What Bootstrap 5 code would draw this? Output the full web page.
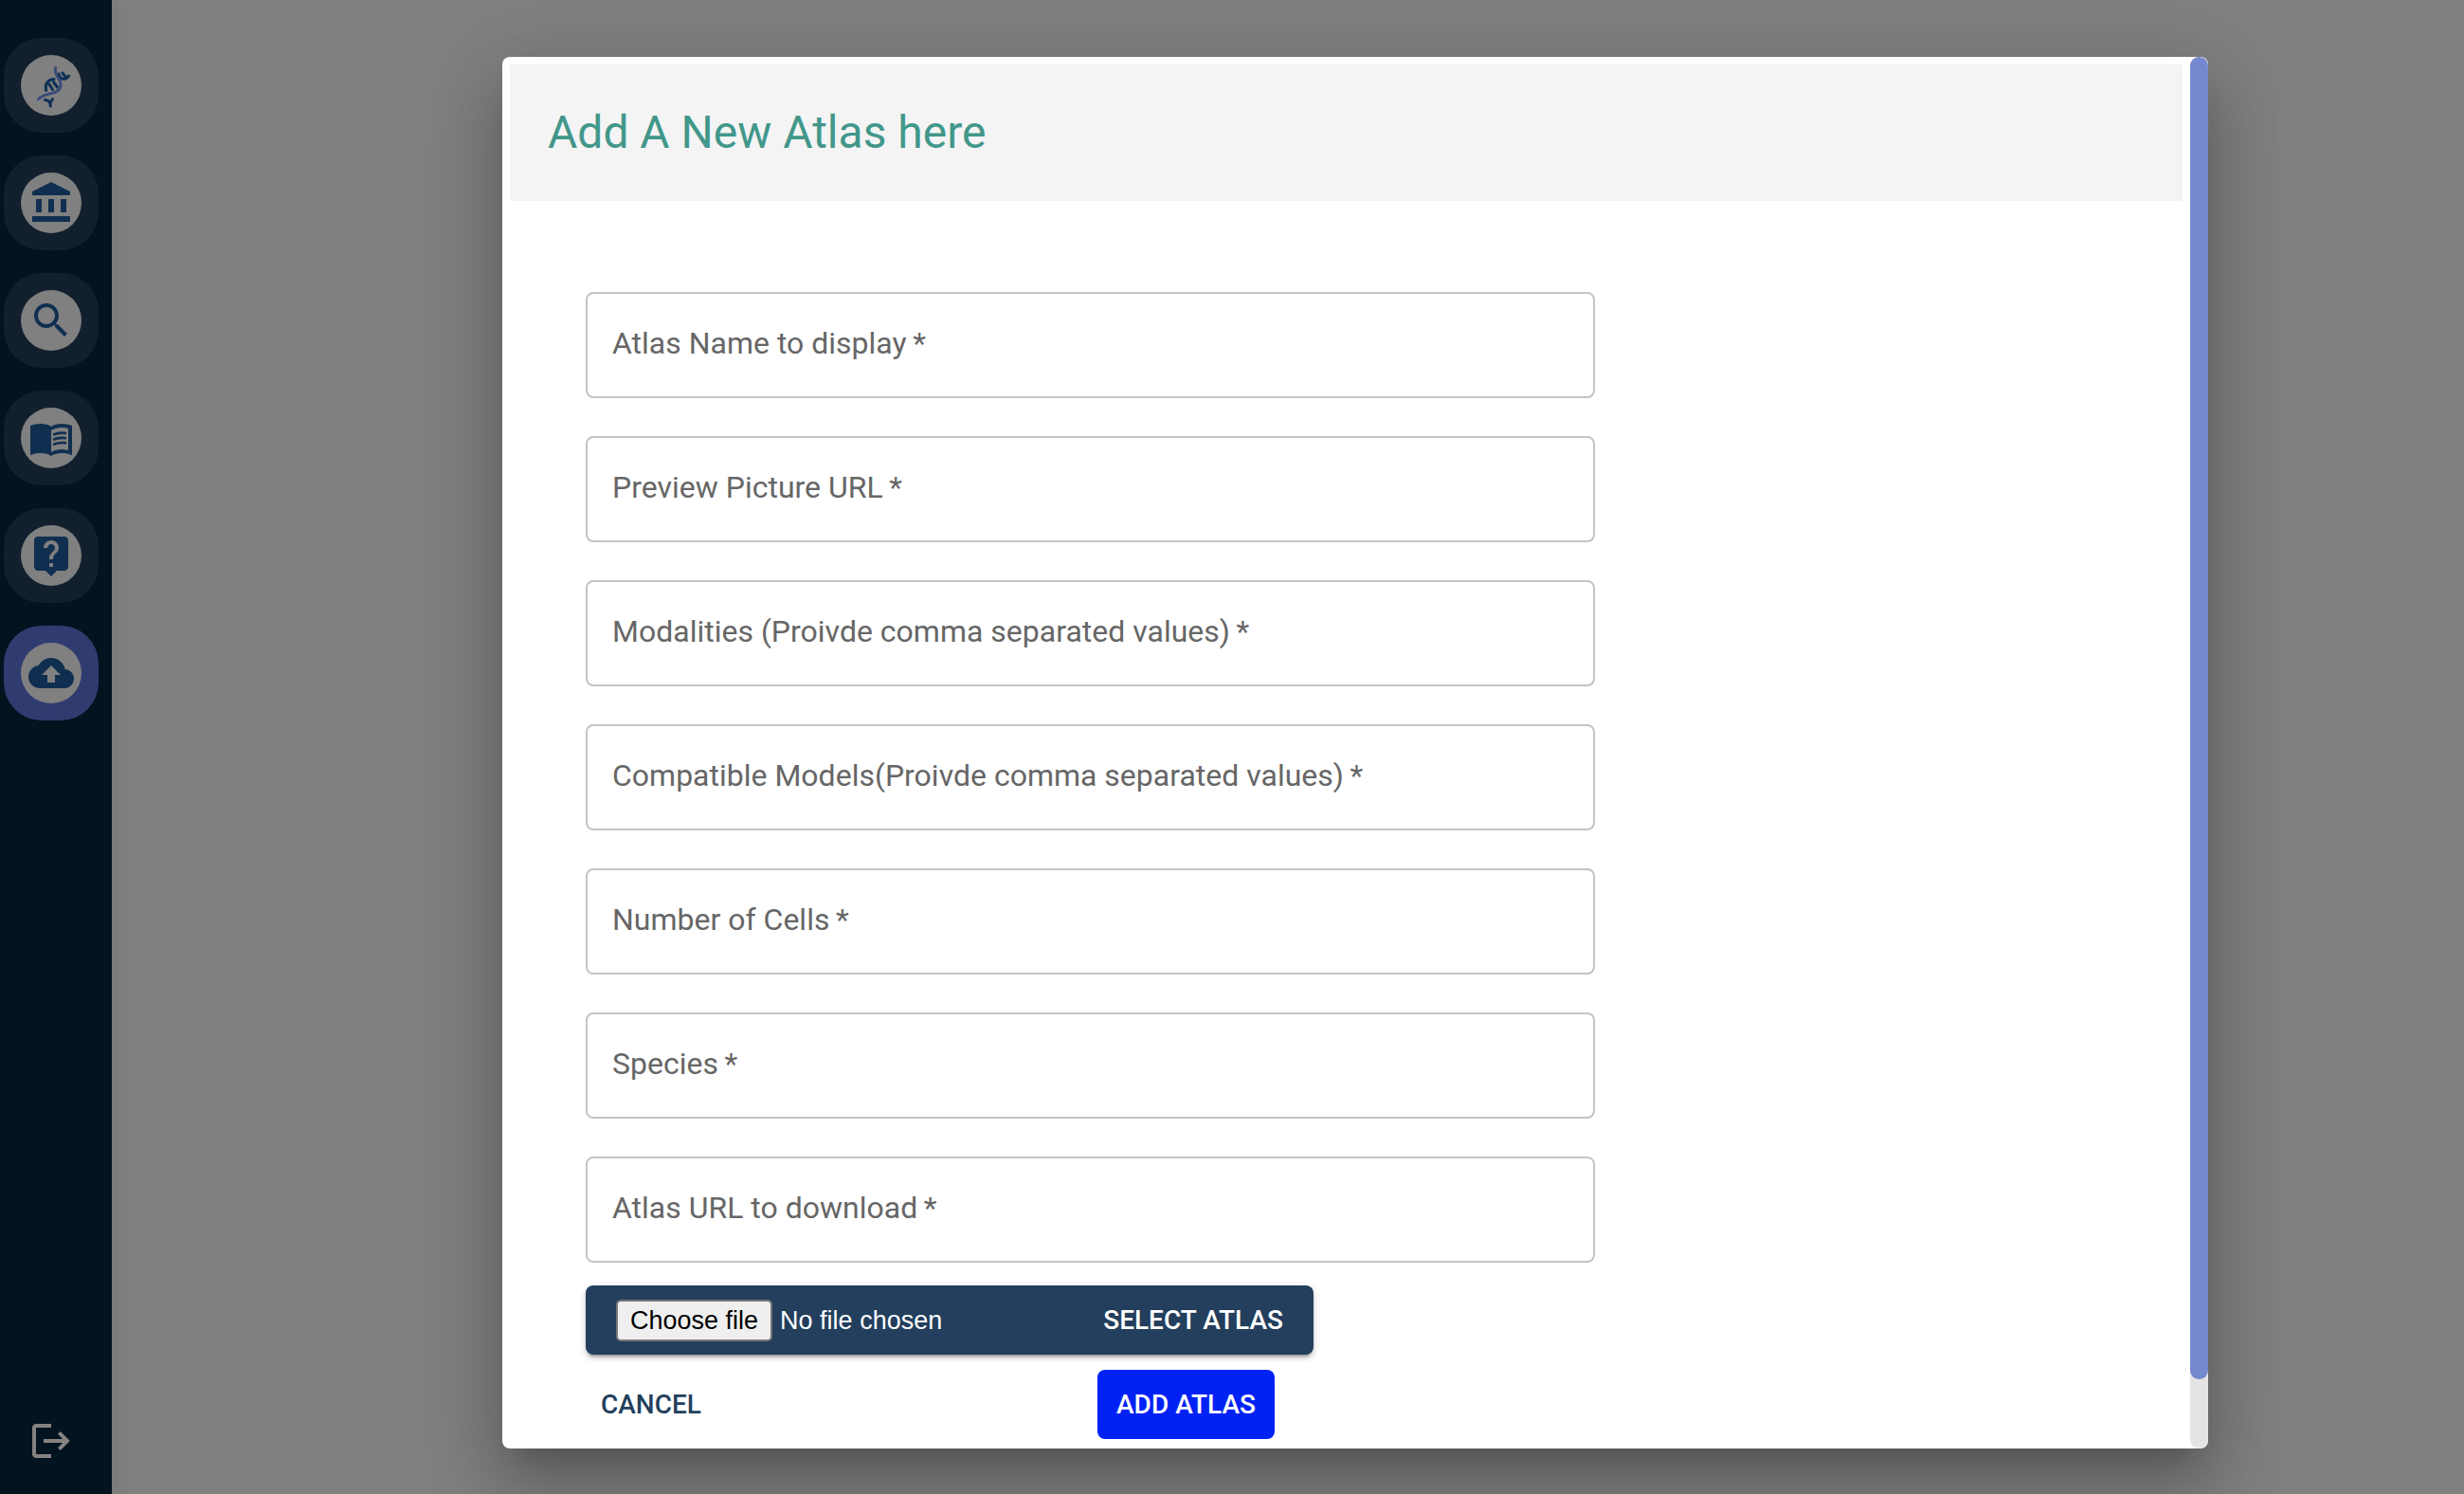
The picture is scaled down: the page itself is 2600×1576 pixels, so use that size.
<!DOCTYPE html>
<html lang="en">
<head>
<meta charset="utf-8">
<meta name="viewport" content="width=device-width, initial-scale=1">
<title>Add A New Atlas</title>
<link rel="stylesheet" href="https://cdn.jsdelivr.net/npm/bootstrap@5.3.0/dist/css/bootstrap.min.css">
<style>
  body { background: #808080; font-family: Roboto, sans-serif; font-size: 32px; }
  .side-rail { width: 118px; background: #041320; padding: 40px 14px 32px 4px; box-shadow: 0 4px 20px rgba(0,0,0,.12); }
  .rail-list { gap: 24px; }
  .rail-tile { width: 100px; height: 100px; border-radius: 40px; background: #12202e; }
  .rail-tile.is-current { background: #303c70; }
  .rail-disc { width: 64px; height: 64px; background: #808080; color: #102f50; }
  .rail-disc svg, .rail-exit svg { width: 48px; height: 48px; fill: currentColor; }
  .rail-exit { color: #868282; margin-left: 24px; }
  .stage { padding: 60px 270px 48px 412px; }
  .dialog-panel { border-radius: 8px; box-shadow: 0 22px 30px -14px rgba(0,0,0,.2), 0 48px 76px 6px rgba(0,0,0,.14), 0 18px 92px 16px rgba(0,0,0,.12); }
  .dialog-main { padding: 8px 8px 10px; }
  .dialog-head { background: #f4f4f4; height: 144px; padding: 0 40px; }
  .dialog-head h1 { font-size: 48px; line-height: 56px; color: #41978a; font-weight: 400; }
  .atlas-form { padding: 96px 80px 0; }
  .field-stack { max-width: 1065px; gap: 40px; }
  .field-stack .form-control { height: 112px; min-height: 112px; border: 2px solid #c4c4c4; border-radius: 8px; padding: 28px; font-size: 32px; }
  .field-stack .form-floating > label { font-size: 32px; line-height: 48px; padding: 30px 28px; color: #666; border: 0; }
  .file-bar { width: 768px; max-width: 100%; height: 73px; margin-top: 24px; padding: 0 32px; border-radius: 8px; background: #233f5d; color: #fff; cursor: pointer;
    box-shadow: 0 6px 2px -4px rgba(0,0,0,.2), 0 4px 4px rgba(0,0,0,.14), 0 2px 10px rgba(0,0,0,.12); }
  .file-pick { font-family: "Liberation Sans", Arial, sans-serif; font-size: 27px; line-height: 32px; gap: 8px; }
  .file-pick b { font-weight: 400; color: #000; background: #efefef; border: 2px solid #767676; border-radius: 5px; padding: 4px 13px; }
  .caps-text { font-size: 28px; font-weight: 500; line-height: 49px; }
  .action-row { margin-top: 16px; width: 727px; max-width: 100%; }
  .action-row .btn { height: 73px; padding: 0 16px; border: 0; border-radius: 8px; }
  .btn-cancel { color: #233f5d; }
  .btn-add, .btn-add:hover { min-width: 187px; background: #0022f5; color: #fff; }
  .scroll-track { width: 19px; border-radius: 10px; background: #e4e4e4; }
  .scroll-thumb { height: 95%; border-radius: 10px; background: #7488cf; }
</style>
</head>
<body>
<div class="d-flex min-vh-100">
  <nav class="side-rail d-flex flex-column justify-content-between flex-shrink-0" aria-label="Main">
    <div class="rail-list d-flex flex-column">
      <a href="#" class="rail-tile d-flex align-items-center justify-content-center" aria-label="Home"><span class="rail-disc rounded-circle d-flex align-items-center justify-content-center">
        <svg viewBox="0 0 48 48"><g fill="none" stroke-linecap="round" stroke-width="3"><path stroke="#0f3055" d="M18.700 29.500c-1.700-6 1.300-11.500 8.300-12M22 23l3.500 5.500M26.500 20.500l4 5.500M32 12c.5 4 3 5.500 5.500 5.300 2.200-.2 4-1.500 5-3.300M36 11l3 4M17.500 39.500c3.500 0 6 2.500 5.800 6.500M25.500 38.500l-2 3"/><path stroke="#384a78" d="M28.700 5.500c-2.200 8.500 6.300 11.500 5.300 18.500-1.500 11-15 6.500-23.500 14.500"/></g></svg></span></a>
      <a href="#" class="rail-tile d-flex align-items-center justify-content-center" aria-label="Institutions"><span class="rail-disc rounded-circle d-flex align-items-center justify-content-center">
        <svg viewBox="0 0 24 24"><path d="M4 10h3v7H4zm6.5 0h3v7h-3zM2 19h20v3H2zm15-9h3v7h-3zm-5-9L2 6v2h20V6z"/></svg></span></a>
      <a href="#" class="rail-tile d-flex align-items-center justify-content-center" aria-label="Search"><span class="rail-disc rounded-circle d-flex align-items-center justify-content-center">
        <svg viewBox="0 0 24 24"><path d="M15.5 14h-.79l-.28-.27C15.41 12.59 16 11.11 16 9.5 16 5.91 13.09 3 9.5 3S3 5.91 3 9.5 5.91 16 9.5 16c1.61 0 3.09-.59 4.23-1.57l.27.28v.79l5 4.99L20.49 19l-4.99-5zm-6 0C7.01 14 5 11.99 5 9.5S7.01 5 9.5 5 14 7.01 14 9.5 11.99 14 9.5 14z"/></svg></span></a>
      <a href="#" class="rail-tile d-flex align-items-center justify-content-center" aria-label="Documentation"><span class="rail-disc rounded-circle d-flex align-items-center justify-content-center">
        <svg viewBox="0 0 24 24"><path fill-rule="evenodd" d="M12 6c-1.450-1.100-3.550-1.500-5.500-1.500S2.450 4.900 1 5.500v15.600c1.500-.8 3.500-1.100 5.500-1.100s4.050.4 5.500 1.500c1.450-1.100 3.550-1.500 5.500-1.500s4 .3 5.500 1.100V5.500C21.500 4.900 19.450 4.500 17.500 4.500S13.450 4.900 12 6zM12 8c1.350-.85 3.800-1.500 5.500-1.500 1.200 0 2.400.15 3.500.5v11.500c-1.100-.35-2.300-.5-3.500-.5-1.700 0-4.150.65-5.500 1.500z"/><path fill="none" stroke="currentColor" stroke-width="1.300" d="M13 10.300c2-.9 4.500-1.200 7-.8M13 12.900c2-.9 4.500-1.200 7-.8M13 15.500c2-.9 4.500-1.200 7-.8"/></svg></span></a>
      <a href="#" class="rail-tile d-flex align-items-center justify-content-center" aria-label="Help"><span class="rail-disc rounded-circle d-flex align-items-center justify-content-center">
        <svg viewBox="0 0 24 24"><path d="M19 2H5c-1.110 0-2 .9-2 2v14c0 1.100.89 2 2 2h4l3 3 3-3h4c1.100 0 2-.9 2-2V4c0-1.100-.9-2-2-2zm-6 16h-2v-2h2v2zm2.070-7.750l-.9.92C13.450 11.900 13 12.500 13 14h-2v-.5c0-1.100.45-2.100 1.170-2.830l1.240-1.260c.37-.36.59-.86.59-1.410 0-1.100-.9-2-2-2s-2 .9-2 2H8c0-2.210 1.790-4 4-4s4 1.790 4 4c0 .88-.36 1.680-.93 2.250z"/></svg></span></a>
      <a href="#" class="rail-tile is-current d-flex align-items-center justify-content-center" aria-label="Upload"><span class="rail-disc rounded-circle d-flex align-items-center justify-content-center">
        <svg viewBox="0 0 24 24"><path d="M19.350 10.040C18.670 6.590 15.640 4 12 4 9.110 4 6.600 5.640 5.350 8.040 2.340 8.360 0 10.910 0 14c0 3.310 2.690 6 6 6h13c2.760 0 5-2.240 5-5 0-2.640-2.050-4.780-4.650-4.960zM14 13v4h-4v-4H7l5-5 5 5h-3z"/></svg></span></a>
    </div>
    <a href="#" class="rail-exit d-flex" aria-label="Log out"><svg viewBox="0 0 24 24"><path d="M5 5h8V3H5c-1.100 0-2 .9-2 2v14c0 1.100.9 2 2 2h8v-2H5zM17.900 7l-1.400 1.400L19.100 11H9v2h10.100l-2.600 2.600 1.400 1.400 5-5z"/></svg></a>
  </nav>
  <main class="stage flex-grow-1 d-flex">
    <div class="dialog-panel bg-white d-flex flex-grow-1 overflow-hidden" role="dialog" aria-labelledby="dialog-title">
      <div class="dialog-main flex-grow-1">
        <header class="dialog-head d-flex align-items-center"><h1 id="dialog-title" class="m-0">Add A New Atlas here</h1></header>
        <form class="atlas-form">
          <div class="field-stack d-flex flex-column">
            <div class="form-floating"><input class="form-control" id="atlas-name" placeholder=" "><label for="atlas-name">Atlas Name to display&thinsp;*</label></div>
            <div class="form-floating"><input class="form-control" id="preview-url" placeholder=" "><label for="preview-url">Preview Picture URL&thinsp;*</label></div>
            <div class="form-floating"><input class="form-control" id="modalities" placeholder=" "><label for="modalities">Modalities (Proivde comma separated values)&thinsp;*</label></div>
            <div class="form-floating"><input class="form-control" id="models" placeholder=" "><label for="models">Compatible Models(Proivde comma separated values)&thinsp;*</label></div>
            <div class="form-floating"><input class="form-control" id="cells" placeholder=" "><label for="cells">Number of Cells&thinsp;*</label></div>
            <div class="form-floating"><input class="form-control" id="species" placeholder=" "><label for="species">Species&thinsp;*</label></div>
            <div class="form-floating"><input class="form-control" id="atlas-url" placeholder=" "><label for="atlas-url">Atlas URL to download&thinsp;*</label></div>
          </div>
          <input type="file" id="atlas-file" class="visually-hidden">
          <label for="atlas-file" class="file-bar d-flex align-items-center justify-content-between">
            <span class="file-pick d-flex align-items-center"><b>Choose file</b><span>No file chosen</span></span>
            <span class="caps-text">SELECT ATLAS</span>
          </label>
          <div class="action-row d-flex justify-content-between">
            <button type="button" class="btn btn-cancel caps-text">CANCEL</button>
            <button type="submit" class="btn btn-add caps-text">ADD ATLAS</button>
          </div>
        </form>
      </div>
      <div class="scroll-track flex-shrink-0"><div class="scroll-thumb"></div></div>
    </div>
  </main>
</div>
<script src="https://cdn.jsdelivr.net/npm/bootstrap@5.3.0/dist/js/bootstrap.bundle.min.js"></script>
</body>
</html>
